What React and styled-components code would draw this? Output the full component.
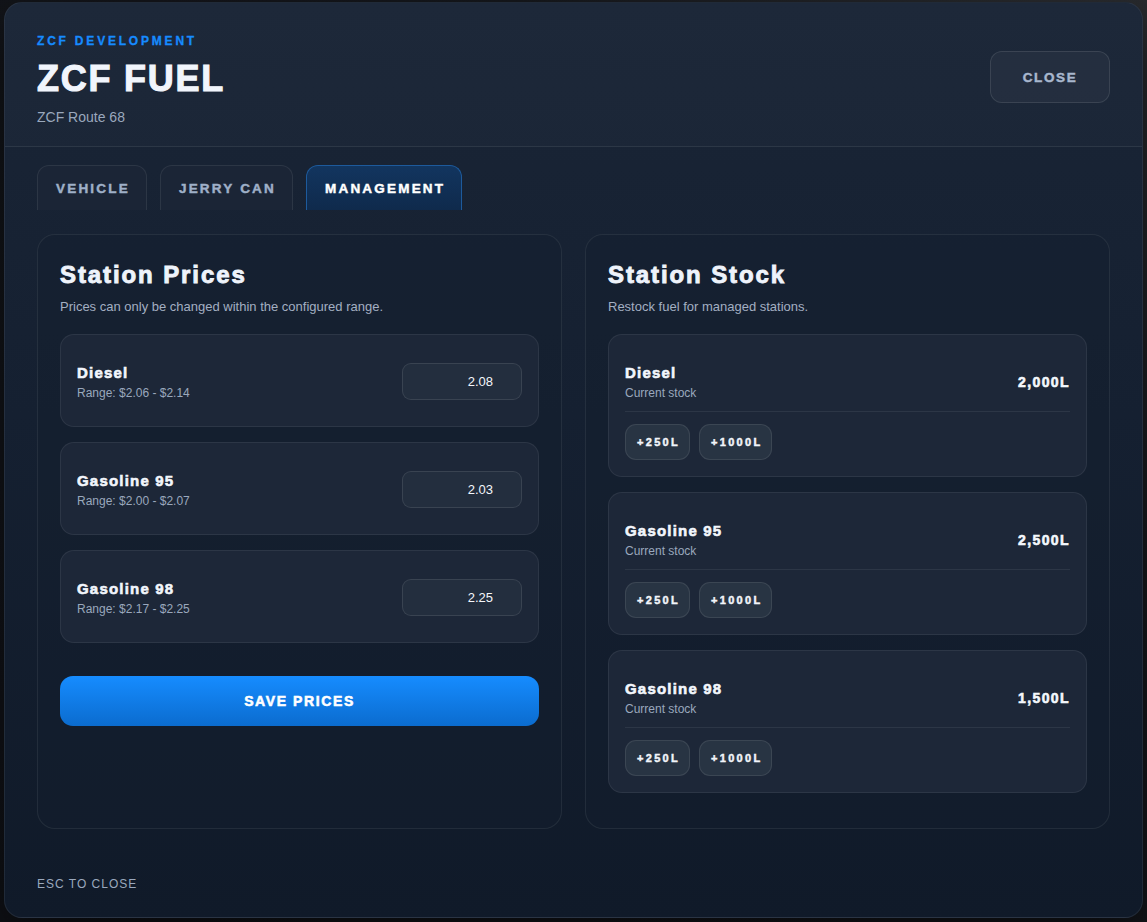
import React, { useState } from "react";
import styled, { createGlobalStyle, css } from "styled-components";

const font = `"Liberation Sans", Arial, sans-serif`;

// the bold labels in the design are a fat, wide grotesque: bold + a thin stroke
const fat = css`
  font-family: ${font};
  font-weight: 700;
  -webkit-text-stroke: 0.6px currentColor;
`;

const GlobalStyle = createGlobalStyle`
  html, body {
    margin: 0;
    padding: 0;
    background: #16191f;
  }
  body {
    font-family: ${font};
    color: #e8eef8;
  }
  * {
    box-sizing: border-box;
  }
`;

const Page = styled.div`
  padding: 2px 4px 4px 4px;
  background: radial-gradient(circle at 95% 0%, #2b2d31 0%, #17191e 40%, #101217 100%);
`;

const Modal = styled.div`
  height: 916px;
  display: flex;
  flex-direction: column;
  border-radius: 18px;
  border: 1px solid rgba(255, 255, 255, 0.07);
  background: linear-gradient(180deg, #1a2536 0%, #152031 45%, #101a29 100%);
  box-shadow: 0 20px 60px rgba(0, 0, 0, 0.6);
  overflow: hidden;
`;

const Header = styled.header`
  display: flex;
  align-items: flex-start;
  justify-content: space-between;
  padding: 30px 32px 20px 32px;
  border-bottom: 1px solid rgba(255, 255, 255, 0.08);
  background: rgba(255, 255, 255, 0.015);
`;

const Eyebrow = styled.div`
  ${fat};
  -webkit-text-stroke: 0.3px currentColor;
  font-size: 12px;
  line-height: 16px;
  letter-spacing: 2.8px;
  color: #168bff;
`;

const Title = styled.h1`
  ${fat};
  -webkit-text-stroke: 1.1px currentColor;
  margin: 10px 0 0 0;
  font-size: 36px;
  line-height: 40px;
  letter-spacing: 1.75px;
  color: #f1f5fc;
`;

const Location = styled.div`
  margin-top: 9px;
  font-size: 14px;
  line-height: 18px;
  color: #9aa8bd;
`;

const CloseButton = styled.button`
  ${fat};
  -webkit-text-stroke: 0.45px currentColor;
  margin-top: 18px;
  width: 120px;
  height: 52px;
  border-radius: 12px;
  border: 1px solid rgba(255, 255, 255, 0.1);
  background: rgba(255, 255, 255, 0.035);
  color: #a8b7ce;
  font-size: 13.5px;
  letter-spacing: 1.6px;
  cursor: pointer;
`;

const Tabs = styled.nav`
  display: flex;
  gap: 13px;
  padding: 18px 32px 0 32px;
`;

const Tab = styled.button`
  ${fat};
  -webkit-text-stroke: 0.45px currentColor;
  height: 45px;
  padding: 0 16px 0 18px;
  border-radius: 12px 12px 0 0;
  border: 1px solid rgba(255, 255, 255, 0.08);
  border-bottom: none;
  background: #1b2536;
  color: #9fb0c8;
  font-size: 13.5px;
  letter-spacing: 2.2px;
  cursor: pointer;

  ${(p) =>
    p.$active &&
    css`
      background: linear-gradient(180deg, #12355f 0%, #0f2a4c 100%);
      border-color: #1d5a9c;
      color: #ffffff;
    `}
`;

const Panels = styled.main`
  flex: 1;
  display: grid;
  grid-template-columns: 1fr 1fr;
  gap: 23px;
  padding: 24px 32px 0 32px;
  min-height: 0;
`;

const Panel = styled.section`
  display: flex;
  flex-direction: column;
  padding: 25px 22px;
  border-radius: 18px;
  border: 1px solid rgba(255, 255, 255, 0.07);
  background: rgba(20, 30, 46, 0.45);
`;

const PanelTitle = styled.h2`
  ${fat};
  -webkit-text-stroke: 0.9px currentColor;
  margin: 0;
  font-size: 24px;
  line-height: 30px;
  letter-spacing: 1.9px;
  color: #eef3fb;
`;

const PanelNote = styled.p`
  margin: 8px 0 18px 0;
  font-size: 13px;
  line-height: 18px;
  color: #a3afc2;
`;

const List = styled.div`
  display: flex;
  flex-direction: column;
  gap: 15px;
`;

const Card = styled.div`
  border-radius: 14px;
  border: 1px solid rgba(255, 255, 255, 0.07);
  background: #1d2738;
`;

const PriceCard = styled(Card)`
  min-height: 93px;
  display: flex;
  align-items: center;
  justify-content: space-between;
  padding: 2px 16px 0 16px;
`;

const StockCard = styled(Card)`
  padding: 28px 16px 16px 16px;
`;

const FuelName = styled.div`
  ${fat};
  font-size: 15px;
  line-height: 20px;
  letter-spacing: 1.2px;
  color: #f2f6fc;
`;

const FuelMeta = styled.div`
  margin-top: 2px;
  font-size: 12px;
  line-height: 16px;
  color: #9aa8bd;
`;

const PriceInput = styled.input`
  width: 120px;
  height: 37px;
  padding: 0 28px 0 12px;
  border-radius: 9px;
  border: 1px solid rgba(255, 255, 255, 0.1);
  background: #232e3e;
  color: #f3f6fb;
  font-family: ${font};
  font-size: 13px;
  text-align: right;
  outline: none;
`;

const SaveButton = styled.button`
  ${fat};
  -webkit-text-stroke: 0.55px currentColor;
  margin-top: 33px;
  height: 50px;
  width: 100%;
  border: none;
  border-radius: 13px;
  background: linear-gradient(180deg, #168cff 0%, #0b6ccf 100%);
  color: #ffffff;
  font-size: 14px;
  letter-spacing: 1.6px;
  cursor: pointer;
`;

const StockTop = styled.div`
  display: flex;
  align-items: center;
  justify-content: space-between;
  padding-bottom: 10px;
  border-bottom: 1px solid rgba(255, 255, 255, 0.07);
`;

const StockAmount = styled.div`
  ${fat};
  font-size: 14px;
  letter-spacing: 1.4px;
  color: #f4f7fc;
`;

const Restock = styled.div`
  display: flex;
  gap: 9px;
  margin-top: 12px;
`;

const RestockButton = styled.button`
  ${fat};
  -webkit-text-stroke: 0.45px currentColor;
  height: 36px;
  padding: 0 9px 0 11px;
  border-radius: 11px;
  border: 1px solid rgba(255, 255, 255, 0.09);
  background: #283443;
  color: #f2f5fa;
  font-size: 11px;
  letter-spacing: 2.3px;
  cursor: pointer;
`;

const Footer = styled.footer`
  padding: 48px 32px 26px 32px;
  font-size: 12px;
  line-height: 14px;
  letter-spacing: 1px;
  color: #9aa8bd;
`;

const prices = [
  { name: "Diesel", min: "2.06", max: "2.14", value: "2.08" },
  { name: "Gasoline 95", min: "2.00", max: "2.07", value: "2.03" },
  { name: "Gasoline 98", min: "2.17", max: "2.25", value: "2.25" },
];

const stock = [
  { name: "Diesel", amount: "2,000L" },
  { name: "Gasoline 95", amount: "2,500L" },
  { name: "Gasoline 98", amount: "1,500L" },
];

const tabs = ["VEHICLE", "JERRY CAN", "MANAGEMENT"];

export default function App() {
  const [active, setActive] = useState("MANAGEMENT");
  const [values, setValues] = useState(prices.map((p) => p.value));

  return (
    <Page>
      <GlobalStyle />
      <Modal>
        <Header>
          <div>
            <Eyebrow>ZCF DEVELOPMENT</Eyebrow>
            <Title>ZCF FUEL</Title>
            <Location>ZCF Route 68</Location>
          </div>
          <CloseButton>CLOSE</CloseButton>
        </Header>

        <Tabs>
          {tabs.map((t) => (
            <Tab key={t} $active={t === active} onClick={() => setActive(t)}>
              {t}
            </Tab>
          ))}
        </Tabs>

        <Panels>
          <Panel>
            <PanelTitle>Station Prices</PanelTitle>
            <PanelNote>Prices can only be changed within the configured range.</PanelNote>
            <List>
              {prices.map((p, i) => (
                <PriceCard key={p.name}>
                  <div>
                    <FuelName>{p.name}</FuelName>
                    <FuelMeta>
                      Range: ${p.min} - ${p.max}
                    </FuelMeta>
                  </div>
                  <PriceInput
                    value={values[i]}
                    onChange={(e) => {
                      const next = [...values];
                      next[i] = e.target.value;
                      setValues(next);
                    }}
                  />
                </PriceCard>
              ))}
            </List>
            <SaveButton>SAVE PRICES</SaveButton>
          </Panel>

          <Panel>
            <PanelTitle>Station Stock</PanelTitle>
            <PanelNote>Restock fuel for managed stations.</PanelNote>
            <List>
              {stock.map((s) => (
                <StockCard key={s.name}>
                  <StockTop>
                    <div>
                      <FuelName>{s.name}</FuelName>
                      <FuelMeta>Current stock</FuelMeta>
                    </div>
                    <StockAmount>{s.amount}</StockAmount>
                  </StockTop>
                  <Restock>
                    <RestockButton>+250L</RestockButton>
                    <RestockButton>+1000L</RestockButton>
                  </Restock>
                </StockCard>
              ))}
            </List>
          </Panel>
        </Panels>

        <Footer>ESC TO CLOSE</Footer>
      </Modal>
    </Page>
  );
}
